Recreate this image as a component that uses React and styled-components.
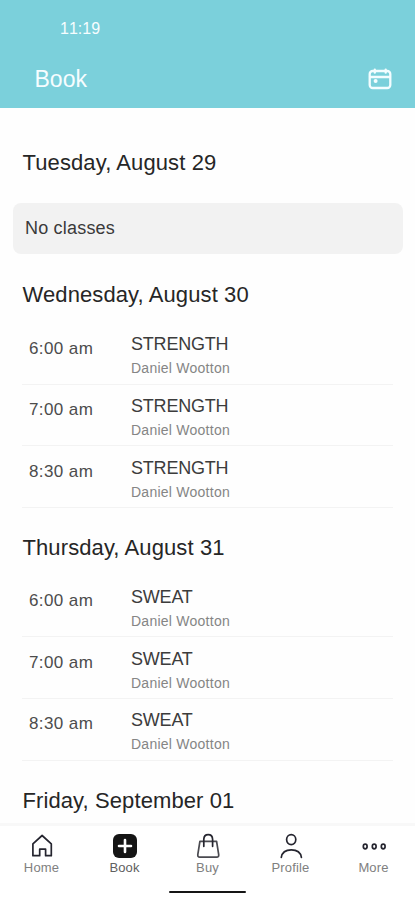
import React from 'react';
import styled, { createGlobalStyle } from 'styled-components';

const GlobalStyle = createGlobalStyle`
  * {
    box-sizing: border-box;
  }

  body {
    margin: 0;
    background: #ffffff;
    font-family: "Liberation Sans", Arial, sans-serif;
  }
`;

const Screen = styled.div`
  display: flex;
  flex-direction: column;
  width: 100%;
  height: 900px;
  overflow: hidden;
  background: #fefefe;
`;

const Header = styled.header`
  flex: none;
  height: 108px;
  background: #7bd0db;
  color: #f6fdff;
`;

const StatusTime = styled.div`
  padding: 19px 0 0 60px;
  font-size: 16px;
  line-height: 20px;
  font-kerning: none;
`;

const TitleBar = styled.div`
  display: flex;
  align-items: center;
  justify-content: space-between;
  height: 32px;
  margin-top: 24px;
  padding: 0 22px 0 34.5px;
`;

const Title = styled.h1`
  margin: 0;
  font-size: 23px;
  font-weight: 400;
  line-height: 32px;
`;

const Schedule = styled.main`
  flex: 1;
  min-height: 0;
  overflow: hidden;
  padding-top: 15px;
`;

const Day = styled.section`
  padding: 0 22px;
`;

const DayTitle = styled.h2`
  height: 68px;
  margin: 0;
  padding: 28px 0 0 0.5px;
  font-size: 22px;
  font-weight: 400;
  line-height: 24px;
  letter-spacing: 0.1px;
  white-space: nowrap;
  color: #262626;
`;

const EmptyCard = styled.div`
  height: 51px;
  margin: 12px -10px 1px -9px;
  padding-left: 12px;
  border-radius: 8px;
  background: #f2f2f2;
  font-size: 18px;
  line-height: 51px;
  letter-spacing: 0.2px;
  color: #3a3a3a;
`;

const ClassRow = styled.div`
  display: flex;
  height: 61.6px;
  border-bottom: 1px solid #f3f3f3;
`;

const ClassTime = styled.div`
  width: 109px;
  padding: 14.5px 0 0 7px;
  font-size: 17px;
  line-height: 22px;
  letter-spacing: 0.4px;
  color: #4c4c4c;
`;

const ClassName = styled.div`
  padding-top: 11.4px;
  font-size: 18px;
  line-height: 20px;
  letter-spacing: -0.2px;
  color: #3c3c3c;
`;

const Coach = styled.div`
  padding-top: 5px;
  font-size: 14px;
  line-height: 18px;
  letter-spacing: 0.25px;
  color: #858585;
`;

const TabBar = styled.nav`
  flex: none;
  display: flex;
  height: 68px;
  border-top: 3px solid #f8f8f8;
  background: #ffffff;
`;

const Tab = styled.div`
  flex: 1;
  display: flex;
  flex-direction: column;
  align-items: center;
  padding-top: 6px;
  font-size: 13px;
  line-height: 16px;
  letter-spacing: 0.15px;
  color: ${props => (props.$active ? '#606060' : '#808080')};
`;

const TabIcon = styled.svg`
  display: block;
  width: 28px;
  height: 28px;
  fill: none;
  stroke: #25252f;
  stroke-width: 1.7;
`;

const HomeArea = styled.div`
  flex: none;
  display: flex;
  justify-content: center;
  height: 9px;
  background: #ffffff;
`;

const HomeIndicator = styled.div`
  width: 77px;
  height: 2px;
  border-radius: 1px;
  background: #151515;
`;

const days = [
  { id: 1, title: 'Tuesday, August 29', classes: [] },
  {
    id: 2,
    title: 'Wednesday, August 30',
    classes: [
      { time: '6:00 am', name: 'STRENGTH', coach: 'Daniel Wootton' },
      { time: '7:00 am', name: 'STRENGTH', coach: 'Daniel Wootton' },
      { time: '8:30 am', name: 'STRENGTH', coach: 'Daniel Wootton' },
    ],
  },
  {
    id: 3,
    title: 'Thursday, August 31',
    classes: [
      { time: '6:00 am', name: 'SWEAT', coach: 'Daniel Wootton' },
      { time: '7:00 am', name: 'SWEAT', coach: 'Daniel Wootton' },
      { time: '8:30 am', name: 'SWEAT', coach: 'Daniel Wootton' },
    ],
  },
  { id: 4, title: 'Friday, September 01', classes: null },
];

const tabs = [
  {
    label: 'Home',
    icon: <path d="M4.9 11.9 14.1 3.5l9.2 8.400v11.800h-5.700v-6.500h-5.900v6.500H4.900z" strokeLinejoin="round" />,
  },
  {
    label: 'Book',
    active: true,
    icon: (
      <>
        <rect x="2" y="2" width="24" height="24" rx="6" fill="#151515" stroke="none" />
        <path d="M14 8v12M8 14h12" stroke="#ffffff" strokeWidth="2.6" strokeLinecap="round" />
      </>
    ),
  },
  {
    label: 'Buy',
    icon: (
      <>
        <path d="M5.9 9.300h16.700l2.100 13.400q.2 2.500-1.900 2.500H5.700q-2.100 0-1.900-2.500z" stroke="#4a4a50" strokeLinejoin="round" />
        <path d="M9.800 14.300V7.300Q10 2.700 14.200 2.700T18.600 7.300v7" strokeLinecap="round" />
      </>
    ),
  },
  {
    label: 'Profile',
    icon: (
      <>
        <ellipse cx="14.2" cy="7.6" rx="4.6" ry="5" />
        <path d="M4.300 25.300c.8-5.100 4.200-7.500 10-7.500s9.300 2.400 10.100 7.500" strokeLinecap="round" />
      </>
    ),
  },
  {
    label: 'More',
    icon: (
      <>
        <ellipse cx="5.200" cy="14.500" rx="1.900" ry="2.300" />
        <ellipse cx="14.200" cy="14.500" rx="1.900" ry="2.300" />
        <ellipse cx="23.200" cy="14.500" rx="1.900" ry="2.300" />
      </>
    ),
  },
];

function CalendarIcon() {
  return (
    <svg width="26" height="26" viewBox="0 0 26 26" fill="none" stroke="#f3fdff" strokeWidth="2.3">
      <rect x="2.700" y="5" width="20.600" height="17" rx="3" />
      <path d="M3 11h20M7.800 3.700v3M18.700 3.700v3" strokeLinecap="round" />
      <circle cx="8.600" cy="15" r="2" fill="#f3fdff" stroke="none" />
    </svg>
  );
}

function App() {
  return (
    <Screen>
      <GlobalStyle />
      <Header>
        <StatusTime>11:19</StatusTime>
        <TitleBar>
          <Title>Book</Title>
          <CalendarIcon />
        </TitleBar>
      </Header>
      <Schedule>
        {days.map(day => (
          <Day key={day.id}>
            <DayTitle>{day.title}</DayTitle>
            {day.classes && day.classes.length === 0 && <EmptyCard>No classes</EmptyCard>}
            {day.classes && day.classes.map(item => (
              <ClassRow key={item.time}>
                <ClassTime>{item.time}</ClassTime>
                <div>
                  <ClassName>{item.name}</ClassName>
                  <Coach>{item.coach}</Coach>
                </div>
              </ClassRow>
            ))}
          </Day>
        ))}
      </Schedule>
      <TabBar>
        {tabs.map(tab => (
          <Tab key={tab.label} $active={tab.active}>
            <TabIcon viewBox="0 0 28 28">{tab.icon}</TabIcon>
            {tab.label}
          </Tab>
        ))}
      </TabBar>
      <HomeArea>
        <HomeIndicator />
      </HomeArea>
    </Screen>
  );
}

export default App;
